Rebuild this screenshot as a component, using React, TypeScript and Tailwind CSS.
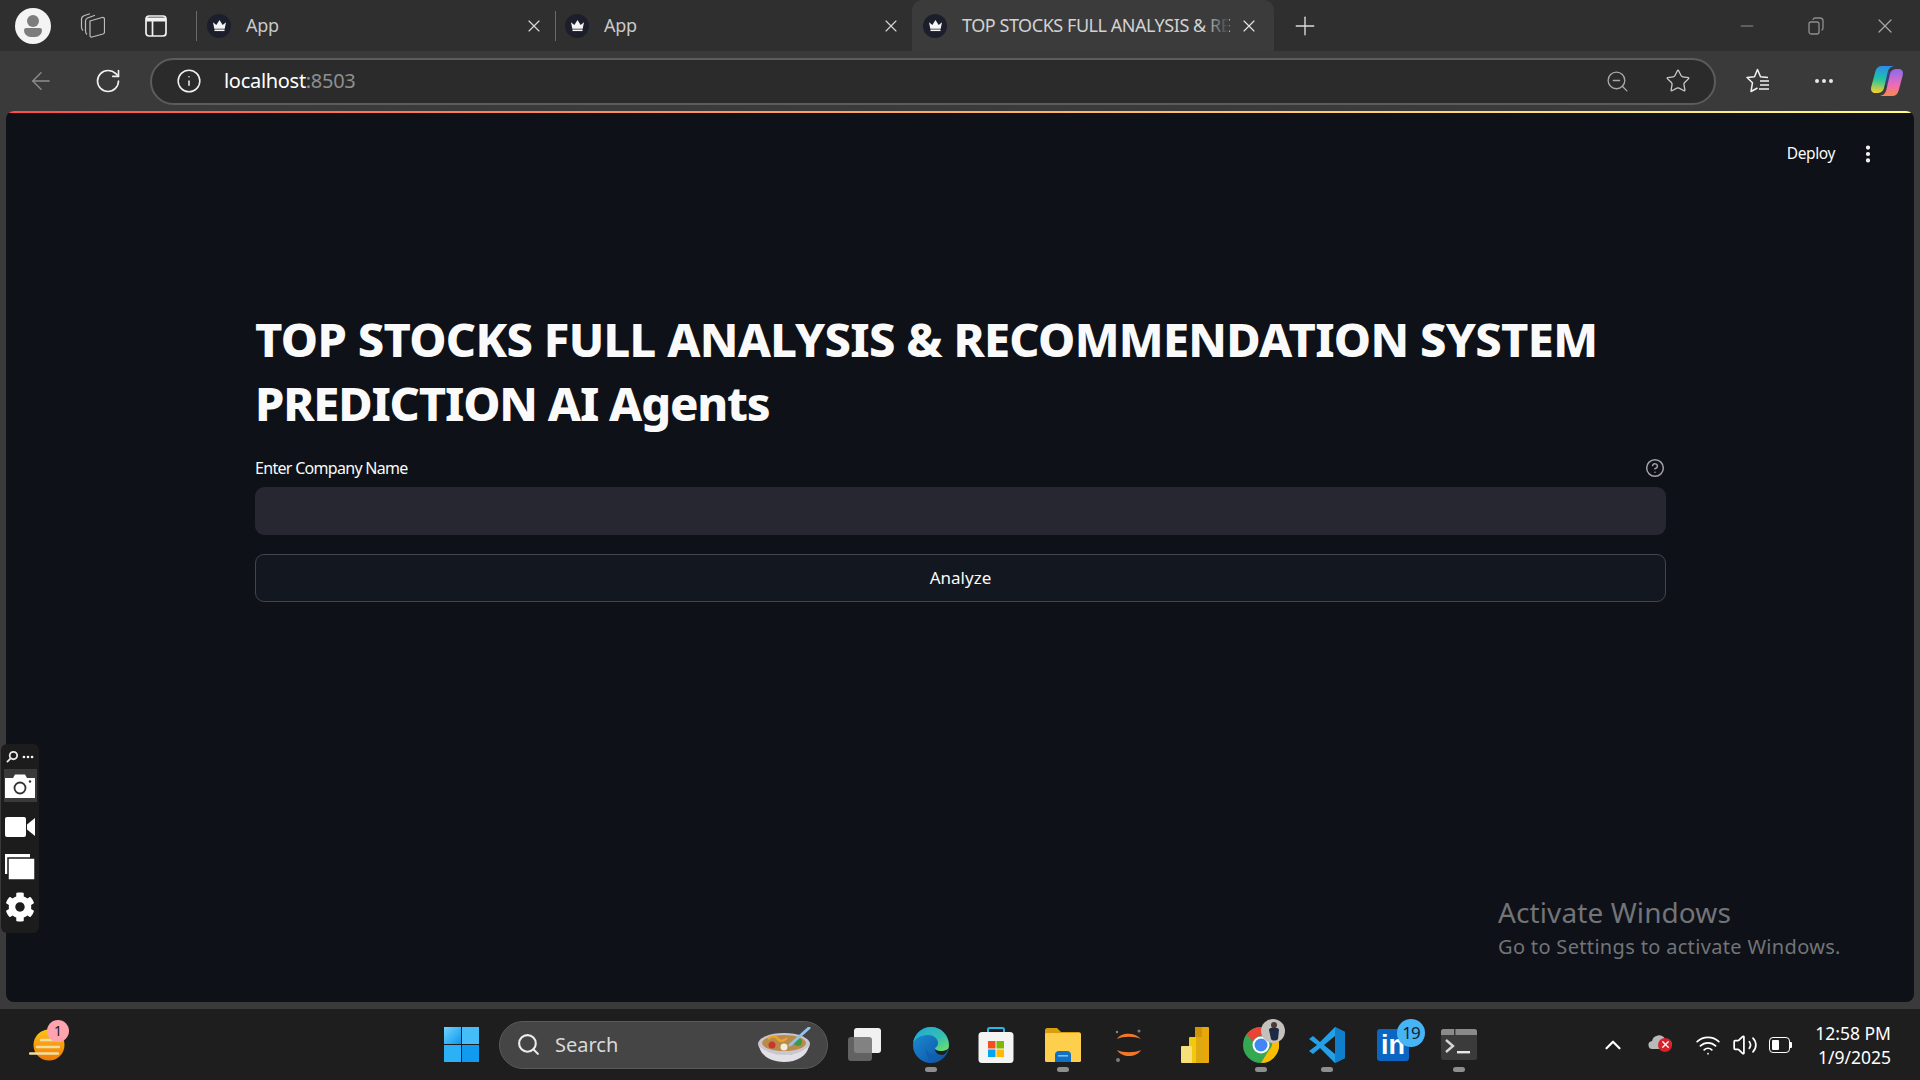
import { ArrowLeft, ChevronUp, CircleHelp, Ellipsis, EllipsisVertical, Info, Minus, Plus, RotateCw, Search, Star, Volume2, Wifi, X, ZoomOut } from "lucide-react";
import { FaCog } from "react-icons/fa";

const chromeFont = "font-['Noto_Sans',sans-serif]";

const Favicon = () => (
  <span className="flex h-[24px] w-[24px] shrink-0 items-center justify-center rounded-full bg-[#1d1e2b]">
    <svg viewBox="0 0 16 14" className="h-[13px] w-[15px]" fill="#f5f5f5">
      <path d="M1 3.5 4.6 6.4 8 1l3.4 5.4L15 3.5l-1.4 7H2.4z" />
      <rect x="2.6" y="11.3" width="10.8" height="1.7" />
    </svg>
  </span>
);

const TabRow = ({ className }: { className: string }) => (
  <div className={`flex h-full items-center ${className}`}>
    <Favicon />
    <span className="ml-[15px] text-[18px] tracking-[-0.3px] text-[#c9c9c9]">App</span>
    <X className="ml-auto mr-[11px] h-[20px] w-[20px] text-[#d5d5d5]" strokeWidth={1.4} />
  </div>
);

const CollectionsIcon = () => (
  <svg viewBox="0 0 25 25" className="h-[25px] w-[25px]" fill="none" stroke="#bdbdbd" strokeWidth="1.2">
    <path d="M10 8 22 4.500c1.500-.4 2.500.4 2.500 2V19c0 1-.5 1.700-1.500 2L12 24c-1.200.3-2-.3-2-1.500z" />
    <path d="M7 21.500C5.800 20.500 5.500 19.500 5.500 18V8C5.500 6.500 6.300 5.500 7.500 5L15 2.200" />
    <path d="M3 17.500C2 16.500 1.500 15.500 1.500 14V6C1.500 4 3 3 4.500 2.500L10 .8" />
  </svg>
);

const LayoutIcon = () => (
  <svg viewBox="0 0 22 22" className="h-[22px] w-[22px]" fill="none" stroke="#f2f2f2" strokeWidth="1.7">
    <rect x="1" y="1" width="20" height="20" rx="3" />
    <path d="M1 4.500h20" strokeWidth="4" />
    <path d="M7.500 6v15" />
  </svg>
);

const FavoritesIcon = () => (
  <svg viewBox="0 0 26 26" className="h-[26px] w-[26px]" fill="none" stroke="#f2f2f2" strokeWidth="1.5" strokeLinejoin="round">
    <path d="M22 9.500 14.500 8.700 11.500 1.500 8.500 8.700 1 9.500 6.500 14.700 5 23.500 11.500 20" />
    <path d="M14 13h9M14 17h9M13 21h10" />
  </svg>
);

const CopilotIcon = () => (
  <svg viewBox="0 0 34 32" className="h-[32px] w-[34px]">
    <defs>
      <linearGradient id="cpA" x1="0.500" y1="0" x2="0.400" y2="1">
        <stop offset="0" stopColor="#2b8cf0" />
        <stop offset="0.500" stopColor="#20c5a0" />
        <stop offset="1" stopColor="#f7d02c" />
      </linearGradient>
      <linearGradient id="cpB" x1="0.500" y1="0" x2="0.500" y2="1">
        <stop offset="0" stopColor="#8a6bf0" />
        <stop offset="0.600" stopColor="#ef6bb8" />
        <stop offset="1" stopColor="#f58a4a" />
      </linearGradient>
    </defs>
    <path d="M12 6h12l-2 14H10z" fill="#3a3f7a" />
    <path d="M12 1h12C20 2 18.500 4 17.500 8L14 23c-1 4-4 5-7 5H5C2 28 .5 25.500 1.200 22L5.500 6C6.300 3 8.500 1 12 1z" fill="url(#cpA)" />
    <path d="M22 31H10c4-1 5.500-3 6.500-7L20 9c1-4 4-5 7-5h2c3 0 4.500 2.500 3.800 6L28.500 26c-.8 3-3 5-6.500 5z" fill="url(#cpB)" />
  </svg>
);

const CameraIcon = () => (
  <svg viewBox="0 0 30 24" className="h-[24px] w-[30px]">
    <path d="M0 4h8l2-3.500h10L22 4h8v20H0z" fill="#fff" />
    <circle cx="15" cy="14" r="5.500" fill="#fff" stroke="#333" strokeWidth="1.800" />
    <circle cx="25" cy="7.500" r="1.200" fill="#333" />
  </svg>
);

const VideoIcon = () => (
  <svg viewBox="0 0 30 20" className="h-[20px] w-[30px]" fill="#fff">
    <rect x="0" y="0" width="21" height="20" rx="2" />
    <path d="M22 7.500 30 1v18l-8-6.500z" />
  </svg>
);

const WindowsIcon = () => (
  <svg viewBox="0 0 30 26" className="h-[26px] w-[30px]">
    <rect x="0" y="0" width="25" height="20" fill="#fff" />
    <rect x="3" y="4" width="27" height="22" fill="#fff" stroke="#1c1c1c" strokeWidth="1.500" />
  </svg>
);

const WeatherIcon = () => (
  <svg viewBox="0 0 36 32" className="h-[32px] w-[36px]">
    <defs>
      <linearGradient id="sun" x1="0" y1="0" x2="0" y2="1">
        <stop offset="0" stopColor="#ffc21a" />
        <stop offset="1" stopColor="#ef7a06" />
      </linearGradient>
    </defs>
    <circle cx="20" cy="16" r="15.500" fill="url(#sun)" />
    <path d="M12 11h20M8 18h22M1 24.500h28" stroke="#f4dda0" strokeWidth="2.400" strokeLinecap="round" />
  </svg>
);

const StartIcon = () => (
  <svg viewBox="0 0 35 35" className="h-[35px] w-[35px]">
    <defs>
      <linearGradient id="st" x1="0" y1="0" x2="1" y2="1">
        <stop offset="0" stopColor="#6fd6ff" />
        <stop offset="1" stopColor="#0d96ee" />
      </linearGradient>
    </defs>
    <rect x="0" y="0" width="17" height="17" fill="url(#st)" />
    <rect x="18" y="0" width="17" height="17" fill="#44bdf9" />
    <rect x="0" y="18" width="17" height="17" fill="#2cb1f7" />
    <rect x="18" y="18" width="17" height="17" fill="#109bf0" />
  </svg>
);

const BowlIcon = () => (
  <svg viewBox="0 0 56 36" className="h-[36px] w-[56px]">
    <ellipse cx="27" cy="17" rx="26" ry="11" fill="#c9c6cf" />
    <ellipse cx="27" cy="16" rx="22" ry="8" fill="#b98b4a" />
    <circle cx="15" cy="18" r="3.500" fill="#c8372e" />
    <circle cx="27" cy="20" r="3.500" fill="#f1ede3" />
    <path d="M11 12c4-4 8-3 10 0s6 2 9-1" stroke="#eda32b" strokeWidth="2.400" fill="none" />
    <circle cx="41" cy="15" r="4" fill="#3f9a48" />
    <path d="M52 1 33 18" stroke="#8fc3ee" strokeWidth="3" strokeLinecap="round" />
    <path d="M2 19c2 10 12 16 25 16s23-6 25-16c-6 6-16 9-25 9S8 25 2 19z" fill="#e3dfe6" />
  </svg>
);

const TaskViewIcon = () => (
  <svg viewBox="0 0 33 33" className="-ml-[7px] h-[33px] w-[33px]">
    <rect x="6" y="0" width="27" height="25" rx="3" fill="#f1f1f1" />
    <rect x="0" y="9" width="24" height="24" rx="3" fill="#6e6e6e" opacity=".85" />
  </svg>
);

const EdgeIcon = () => (
  <svg viewBox="0 0 36 36" className="h-[36px] w-[36px]">
    <defs>
      <linearGradient id="edA" x1="0" y1="0" x2="1" y2="1">
        <stop offset="0" stopColor="#1fa5d8" />
        <stop offset="0.600" stopColor="#35c1b0" />
        <stop offset="1" stopColor="#7ce05a" />
      </linearGradient>
      <linearGradient id="edB" x1="0" y1="0" x2="1" y2="1">
        <stop offset="0" stopColor="#1d8fd8" />
        <stop offset="1" stopColor="#0c4f9c" />
      </linearGradient>
    </defs>
    <circle cx="18" cy="18" r="18" fill="url(#edB)" />
    <path d="M0 16C2 6 10 0 18 0c10 0 18 8 18 19 0 3-3 5-8 5-4 0-6-1-6-3 2-1 3-3 3-5 0-5-5-8-10-8S3 10 0 16z" fill="url(#edA)" />
    <path d="M13 18c-1 6 3 10 9 10 3 0 5-.5 7-2-2 6-8 10-14 10 3-3-4-10-2-18z" fill="#0f5fae" />
    <path d="M36 19c0 3-3 5-8 5-3 0-5-.6-6-2 0 3 3 6 7 6 2 0 5-2 7-9z" fill="#1e1e1e" />
  </svg>
);

const StoreIcon = () => (
  <svg viewBox="0 0 36 36" className="h-[36px] w-[36px]">
    <path d="M10 6V2.500c0-1 .5-1.500 1.500-1.500h13c1 0 1.500.5 1.500 1.500V6" fill="none" stroke="#27b7ec" strokeWidth="2" />
    <rect x="0.500" y="5" width="35" height="31" rx="3.500" fill="#f4f4f4" />
    <rect x="10" y="14" width="7.500" height="7.500" fill="#f25022" />
    <rect x="18.500" y="14" width="7.500" height="7.500" fill="#7fba00" />
    <rect x="10" y="22.500" width="7.500" height="7.500" fill="#00a4ef" />
    <rect x="18.500" y="22.500" width="7.500" height="7.500" fill="#ffb900" />
  </svg>
);

const FilesIcon = () => (
  <svg viewBox="0 0 36 34" className="h-[34px] w-[36px]">
    <path d="M0 2c0-1 1-2 2-2h10l4 4h18c1 0 2 1 2 2v6H0z" fill="#d99e0b" />
    <rect x="0" y="5" width="36" height="29" rx="1.500" fill="#fdcf4d" />
    <path d="M10 34v-7c0-2.500 1.500-4 4-4h8c2.500 0 4 1.500 4 4v7z" fill="#0f70c4" />
    <rect x="13" y="27" width="10" height="1.600" fill="#79c1ee" />
  </svg>
);

const ArcIcon = () => (
  <svg viewBox="0 0 30 36" className="h-[36px] w-[30px]" fill="none">
    <path d="M3 12C7 5 21 5 27 12 21 9 9 9 3 12z" fill="#f37726" />
    <path d="M3 23c5 8 19 8 24 0-6 3-18 3-24 0z" fill="#f37726" />
    <circle cx="25" cy="4" r="1.500" fill="#7b7b7b" />
    <circle cx="3" cy="5" r="1.200" fill="#8a8a8a" />
    <circle cx="4" cy="33" r="2" fill="#7b7b7b" />
  </svg>
);

const PowerBiIcon = () => (
  <svg viewBox="0 0 28 36" className="h-[36px] w-[28px]">
    <rect x="14" y="0" width="14" height="36" rx="1" fill="#e8a80c" />
    <rect x="14" y="0" width="7" height="36" fill="#d19508" />
    <rect x="8" y="10" width="14" height="26" rx="1" fill="#f2c811" />
    <rect x="15" y="10" width="7" height="26" fill="#dfaa10" />
    <rect x="0" y="19" width="11" height="17" rx="1" fill="#f7df7a" />
  </svg>
);

const ChromeIcon = () => (
  <svg viewBox="0 0 36 36" className="h-[36px] w-[36px]">
    <circle cx="18" cy="18" r="18" fill="#34a853" />
    <path d="M18 0a18 18 0 0 1 15.600 9H18a9 9 0 0 0-8 5L3.500 7.500A18 18 0 0 1 18 0z" fill="#ea4335" />
    <path d="M33.600 9A18 18 0 0 1 18 36l8-13a9 9 0 0 0 0-14z" fill="#fbbc04" />
    <circle cx="18" cy="18" r="8.500" fill="#fff" />
    <circle cx="18" cy="18" r="6.500" fill="#4285f4" />
  </svg>
);

const ChromeAvatar = () => (
  <svg viewBox="0 0 24 24" className="absolute left-[33px] top-[10px] h-[24px] w-[24px]">
    <circle cx="12" cy="12" r="12" fill="#c4c0bb" />
    <circle cx="13" cy="6" r="3" fill="#4a3a30" />
    <path d="M8 11c0-1.500 1.500-2.500 5-2.500s5 1 5 2.500l-1 9c-2 2-6 2-7 0z" fill="#1d2a44" />
  </svg>
);

const VsCodeIcon = () => (
  <svg viewBox="0 0 36 36" className="h-[36px] w-[36px]">
    <path d="M26 0 36 5v26l-10 5L11 21l-7 6-4-3 8-6-8-6 4-3 7 6z" fill="#23a0e8" />
    <path d="M26 0 36 5v26l-10 5z" fill="#0f7fcc" />
    <path d="M26 9 15 18l11 9z" fill="#1e1e1e" />
  </svg>
);

const TerminalIcon = () => (
  <svg viewBox="0 0 36 31" className="h-[31px] w-[36px]">
    <rect x="0" y="0" width="36" height="31" rx="2.500" fill="#3b3b3b" />
    <path d="M0 2.500C0 1 1 0 2.500 0h31C35 0 36 1 36 2.500V6H0z" fill="#8a8a8a" />
    <rect x="13" y="0" width="1.500" height="6" fill="#3b3b3b" />
    <path d="m5 11 7 6-7 6" stroke="#d5d5d5" strokeWidth="2.400" fill="none" />
    <rect x="16" y="22" width="13" height="2.400" fill="#e8e8e8" />
  </svg>
);

const OneDriveError = () => (
  <div className="relative h-[24px] w-[24px]">
    <svg viewBox="0 0 24 18" className="h-[18px] w-[24px]">
      <path d="M5 16a4 4 0 0 1-1-8 7 7 0 0 1 13-2 5 5 0 0 1 3 10z" fill="#b9b9b9" />
    </svg>
    <span className="absolute left-[10px] top-[5px] flex h-[14px] w-[14px] items-center justify-center rounded-full bg-[#d9212c]">
      <X className="h-[11px] w-[11px] text-white" strokeWidth={3} />
    </span>
  </div>
);

const BatteryIcon = () => (
  <div className="flex items-center">
    <div className="flex h-[16px] w-[21px] items-center rounded-[4px] border-[1.5px] border-white p-[2px]">
      <div className="h-full w-[7px] rounded-[1px] bg-white" />
    </div>
    <div className="h-[6px] w-[2px] rounded-r-[1px] bg-white" />
  </div>
);

const Slot = ({ className, dot, children }: { className: string; dot?: boolean; children: React.ReactNode }) => (
  <div className={`relative flex h-full shrink-0 items-center justify-center ${className}`}>
    {children}
    {dot && <span className="absolute left-1/2 top-[58px] h-[5px] w-[12px] -translate-x-1/2 rounded-full bg-[#8e8e8e]" />}
  </div>
);

export default function App() {
  return (
    <div className={`relative flex h-screen w-screen flex-col overflow-hidden bg-[#3a3a3a] ${chromeFont}`}>
      {/* Tab strip */}
      <div className="flex h-[51px] shrink-0 items-center bg-[#2f2f2f]">
        <div className="ml-[15px] flex h-[36px] w-[36px] flex-col items-center justify-center rounded-full bg-[#f4f4f4]">
          <span className="h-[12px] w-[12px] rounded-full bg-[#7d7d7d]" />
          <span className="mt-[1px] h-[9px] w-[18px] rounded-b-[9px] rounded-t-[3px] bg-[#7d7d7d]" />
        </div>
        <div className="ml-[29px]">
          <CollectionsIcon />
        </div>
        <div className="ml-[40px]">
          <LayoutIcon />
        </div>
        <div className="ml-[29px] h-[30px] w-px bg-[#6a6a6a]" />
        <div className="h-full w-[358px]">
          <TabRow className="pl-[10px]" />
        </div>
        <div className="h-[30px] w-px bg-[#6a6a6a]" />
        <div className="h-full w-[356px]">
          <TabRow className="pl-[9px]" />
        </div>
        <div className="relative flex h-full w-[362px] items-center rounded-t-[10px] bg-[#3b3b3b] pl-[11px]">
          <Favicon />
          <div className="relative ml-[15px] w-[267px] whitespace-nowrap text-[18px] tracking-[-0.45px] text-[#d2d2d2]">
            TOP STOCKS FULL ANALYSIS &amp; RE
            <span className="absolute inset-y-0 right-0 w-[26px] bg-linear-to-l from-[#3b3b3b] to-transparent" />
          </div>
          <X className="ml-[10px] h-[20px] w-[20px] text-[#e2e2e2]" strokeWidth={1.4} />
        </div>
        <Plus className="ml-[16px] h-[30px] w-[30px] text-[#dcdcdc]" strokeWidth={1.1} />
        <div className="ml-auto flex items-center pr-[23px]">
          <Minus className="h-[20px] w-[20px] text-[#8f8f8f]" strokeWidth={1.2} />
          <svg viewBox="0 0 16 18" className="ml-[51px] h-[18px] w-[16px]" fill="none" stroke="#8f8f8f" strokeWidth="1.3">
            <rect x="1" y="5" width="10" height="12" rx="2" />
            <path d="M5 3c0-1 1-2 2-2h5c2 0 3 1 3 3v7c0 1-.5 2-1.500 2" />
          </svg>
          <X className="ml-[49px] h-[24px] w-[24px] text-[#a8a8a8]" strokeWidth={1.2} />
        </div>
      </div>

      {/* Toolbar */}
      <div className="flex h-[60px] shrink-0 items-center">
        <ArrowLeft className="ml-[27px] h-[28px] w-[28px] text-[#8d8d8d]" strokeWidth={1.2} />
        <RotateCw className="ml-[39px] h-[28px] w-[28px] text-[#f0f0f0]" strokeWidth={1.4} />
        <div className="ml-[28px] flex h-[47px] w-[1566px] items-center rounded-full border-2 border-[#5c5c5c] bg-[#2b2b2b] pl-[24px] pr-[23px]">
          <Info className="h-[26px] w-[26px] text-[#f0f0f0]" strokeWidth={1.4} />
          <span className="ml-[22px] text-[20px] tracking-[-0.3px] text-white">
            localhost<span className="text-[#8f8f8f]">:8503</span>
          </span>
          <ZoomOut className="ml-auto h-[25px] w-[25px] text-[#a8a8a8]" strokeWidth={1.3} />
          <Star className="ml-[35px] h-[26px] w-[26px] text-[#c9c9c9]" strokeWidth={1.2} />
        </div>
        <div className="ml-[30px]">
          <FavoritesIcon />
        </div>
        <Ellipsis className="ml-[40px] h-[24px] w-[24px] text-[#e8e8e8]" strokeWidth={2} />
        <div className="ml-[34px]">
          <CopilotIcon />
        </div>
      </div>

      {/* Streamlit page */}
      <div className="relative mx-[6px] h-[891px] shrink-0 overflow-hidden rounded-[8px] bg-[#0e1117]">
        <div className="h-[2px] bg-linear-to-r from-[#ff4b4b] to-[#fffd80]" />
        <div className="flex h-[82px] items-center justify-end pr-[35px]">
          <span className="text-[15.5px] tracking-[-0.4px] text-[#fafafa]">Deploy</span>
          <EllipsisVertical className="ml-[22px] h-[22px] w-[22px] text-[#fafafa]" strokeWidth={2.6} />
        </div>
        <div className="ml-[249px] mr-[248px] pt-[112px]">
          <h1 className="text-[47px] font-extrabold leading-[64px] text-[#fafafa]">
            <span className="tracking-[-0.7px]">TOP STOCKS FULL ANALYSIS &amp; RECOMMENDATION SYSTEM</span>
            <br />
            <span className="tracking-[-1.2px]">PREDICTION AI Agents</span>
          </h1>
          <div className="mt-[23px] flex h-[20px] items-center justify-between pr-[1px]">
            <span className="text-[16px] tracking-[-0.7px] text-[#fafafa]">Enter Company Name</span>
            <CircleHelp className="h-[20px] w-[20px] text-[#a0a2a6]" strokeWidth={1.8} />
          </div>
          <div className="mt-[9px] h-[48px] rounded-[9px] bg-[#262730]" />
          <button className="mt-[19px] flex h-[48px] w-full items-center justify-center rounded-[9px] border border-[#43454d] bg-[#13171f] text-[17px] text-[#fafafa]">
            Analyze
          </button>
        </div>

        {/* Activate watermark */}
        <div className="absolute left-[1492px] top-[783px] text-[#727478]">
          <div className="text-[28px] leading-[36px] tracking-[0.1px]">Activate Windows</div>
          <div className="text-[20px] leading-[33px] tracking-[0.33px]">Go to Settings to activate Windows.</div>
        </div>
      </div>

      {/* Floating capture toolbar */}
      <div className="absolute left-[1px] top-[744px] flex h-[189px] w-[38px] flex-col items-center rounded-[6px] bg-[#1c1c1c]">
        <div className="flex h-[25px] w-full items-center justify-center gap-[2px]">
          <svg viewBox="0 0 14 14" className="h-[13px] w-[13px]" fill="none" stroke="#e8e8e8" strokeWidth="2">
            <circle cx="8" cy="6" r="4" />
            <path d="M5 9 1 13" />
          </svg>
          <Ellipsis className="h-[14px] w-[14px] text-white" strokeWidth={2.6} />
        </div>
        <div className="flex h-[33px] w-[33px] items-center justify-center bg-[#3a3a3a]">
          <CameraIcon />
        </div>
        <div className="mt-[9px] flex h-[32px] items-center">
          <VideoIcon />
        </div>
        <div className="mt-[8px] flex h-[32px] items-center">
          <WindowsIcon />
        </div>
        <FaCog className="mt-[9px] h-[30px] w-[30px] text-white" />
      </div>

      {/* Taskbar */}
      <div className="mt-[7px] flex min-h-0 flex-1 items-center bg-[#1e1e1e]">
        <div className="relative ml-[29px] h-[32px] w-[36px]">
          <WeatherIcon />
          <span className="absolute -top-[9px] left-[18px] flex h-[22px] w-[22px] items-center justify-center rounded-full bg-[#ffa3ae] text-[14px] text-[#1a1a1a]">
            1
          </span>
        </div>
        <div className="ml-[379px]">
          <StartIcon />
        </div>
        <div className="ml-[20px] flex h-[48px] w-[329px] items-center rounded-full border border-[#5a5a5a] bg-[#454545] pl-[16px] pr-[14px]">
          <Search className="h-[25px] w-[25px] text-[#ededed]" strokeWidth={2} />
          <span className="ml-[14px] text-[20px] text-[#d9d9d9]">Search</span>
          <div className="ml-auto">
            <BowlIcon />
          </div>
        </div>
        <div className="ml-[8px] flex h-full">
          <Slot className="w-[64px]">
            <TaskViewIcon />
          </Slot>
          <Slot className="w-[62px]" dot>
            <EdgeIcon />
          </Slot>
          <Slot className="w-[68px]">
            <StoreIcon />
          </Slot>
          <Slot className="w-[66px]" dot>
            <FilesIcon />
          </Slot>
          <Slot className="w-[66px]">
            <ArcIcon />
          </Slot>
          <Slot className="w-[66px]">
            <PowerBiIcon />
          </Slot>
          <Slot className="w-[66px]" dot>
            <ChromeIcon />
            <ChromeAvatar />
          </Slot>
          <Slot className="w-[66px]" dot>
            <VsCodeIcon />
          </Slot>
          <Slot className="w-[66px]">
            <span className="flex h-[32px] w-[32px] items-end justify-center rounded-[3px] bg-[#0a66c2] pb-[1px] font-['Liberation_Sans',sans-serif] text-[27px] font-bold leading-[30px] text-white">
              in
            </span>
            <span className="absolute left-[37px] top-[10px] flex h-[28px] w-[28px] items-center justify-center rounded-full bg-[#47b5f5] text-[17px] tracking-[-1px] text-[#14222e]">
              19
            </span>
          </Slot>
          <Slot className="w-[66px]" dot>
            <TerminalIcon />
          </Slot>
        </div>
        <div className="ml-auto flex items-center pr-[29px]">
          <ChevronUp className="h-[26px] w-[26px] text-white" strokeWidth={2} />
          <div className="ml-[22px]">
            <OneDriveError />
          </div>
          <Wifi className="ml-[23px] h-[26px] w-[26px] text-white" strokeWidth={1.6} />
          <Volume2 className="ml-[11px] h-[26px] w-[26px] text-white" strokeWidth={1.6} />
          <div className="ml-[11px]">
            <BatteryIcon />
          </div>
          <div className="ml-[23px] flex flex-col items-end text-[17.5px] leading-[24px] text-white">
            <span>12:58 PM</span>
            <span>1/9/2025</span>
          </div>
        </div>
      </div>
    </div>
  );
}
